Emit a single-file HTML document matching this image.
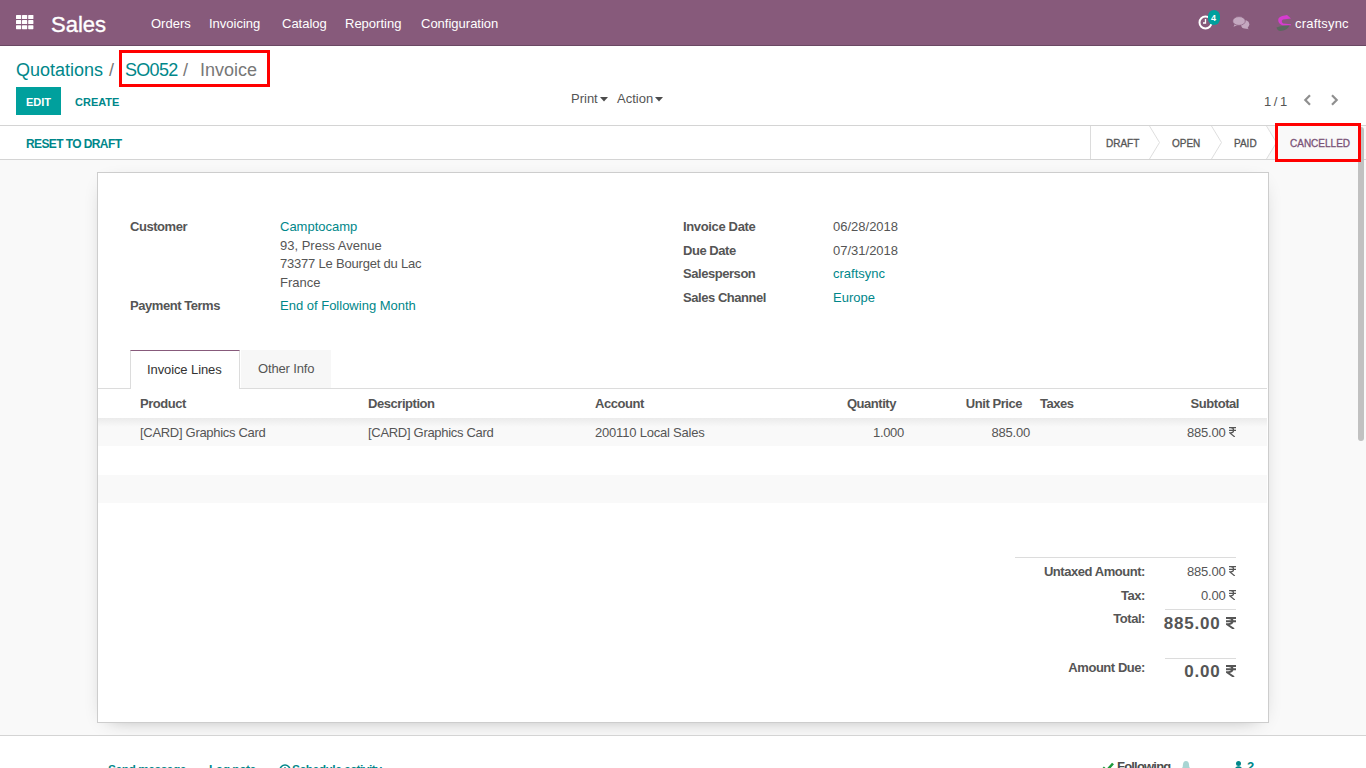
<!DOCTYPE html>
<html><head><meta charset="utf-8">
<style>
html,body{margin:0;padding:0;width:1366px;height:768px;overflow:hidden;background:#f9f9f9;font-family:"Liberation Sans",sans-serif;color:#555}
.a{position:absolute}
.t{position:absolute;white-space:nowrap;line-height:0;font-size:13px}
.b{font-weight:bold}
.teal{color:#00878a}
#nav{left:0;top:0;width:1366px;height:45px;background:#875a7b;border-bottom:1px solid #6a4863}
#nav .t{color:#fff}
#cp{left:0;top:46px;width:1366px;height:79px;background:#fff;border-bottom:1px solid #d4d4d4}
#sb{left:0;top:126px;width:1366px;height:33px;background:#fff;border-bottom:1px solid #d4d4d4}
#sheet{left:97px;top:172px;width:1170px;height:549px;background:#fff;border:1px solid #cdcdcd;box-shadow:0 5px 20px -12px rgba(0,0,0,.45)}
#chat{left:0;top:735px;width:1366px;height:33px;background:#fff;border-top:1px solid #d4d4d4}
</style></head><body>

<!-- NAVBAR -->
<div id="nav" class="a">
  <svg class="a" style="left:16px;top:15px" width="18" height="15" viewBox="0 0 18 15"><g fill="#fff"><rect x="0" y="0" width="5.2" height="4" rx="0.6"/><rect x="6" y="0" width="5.2" height="4" rx="0.6"/><rect x="12.2" y="0" width="5.2" height="4" rx="0.6"/><rect x="0" y="5.1" width="5.2" height="4" rx="0.6"/><rect x="6" y="5.1" width="5.2" height="4" rx="0.6"/><rect x="12.2" y="5.1" width="5.2" height="4" rx="0.6"/><rect x="0" y="10.2" width="5.2" height="4" rx="0.6"/><rect x="6" y="10.2" width="5.2" height="4" rx="0.6"/><rect x="12.2" y="10.2" width="5.2" height="4" rx="0.6"/></g></svg>
  <div class="t" style="left:51px;top:25px;font-size:22px;-webkit-text-stroke:.35px #fff">Sales</div>
  <div class="t" style="left:151px;top:24px">Orders</div>
  <div class="t" style="left:209px;top:24px">Invoicing</div>
  <div class="t" style="left:282px;top:24px">Catalog</div>
  <div class="t" style="left:345px;top:24px">Reporting</div>
  <div class="t" style="left:421px;top:24px">Configuration</div>
  <!-- clock -->
  <svg class="a" style="left:1198px;top:15px" width="16" height="16" viewBox="0 0 16 16">
    <circle cx="7.5" cy="7.5" r="6" fill="none" stroke="#fff" stroke-width="2"/>
    <path d="M7.5 4v4h-2.5" fill="none" stroke="#fff" stroke-width="1.3"/>
  </svg>
  <div class="a" style="left:1208px;top:10px;width:12px;height:15px;border-radius:6px;background:#00a09d"></div>
  <div class="t b" style="left:1211px;top:18px;font-size:9px">4</div>
  <!-- chat -->
  <svg class="a" style="left:1232px;top:16px" width="18" height="14" viewBox="0 0 18 14">
    <g fill="#c4a8c0">
      <ellipse cx="13" cy="8.3" rx="4.3" ry="4"/>
      <path d="M14.5 11L16.8 13.2L11 12Z"/>
      <path d="M2.8 8L1.5 10.8L6 9Z" />
      <ellipse cx="7" cy="5" rx="6.3" ry="4.4" stroke="#875a7b" stroke-width=".7"/>
    </g>
  </svg>
  <!-- logo -->
  <svg class="a" style="left:1272px;top:10px" width="24" height="24" viewBox="0 0 24 24">
    <path d="M6.5 8.5C8 6 12 5.5 15 5L19 8.5L11 9.5C10 10 9.5 11 10 12.2L11 13.5L19 14.2V15.2L10.5 15.2C7.5 14.5 5.5 11.5 6.5 8.5Z" fill="#d63ccf"/>
    <path d="M4.5 17.5C8 15.8 13 15.8 17.5 15.6C16 19 12.5 21 8.5 21C6.5 21 5 19.5 4.5 17.5Z" fill="#5b685e"/>
  </svg>
  <div class="t" style="left:1295px;top:24px;letter-spacing:.2px">craftsync</div>
</div>

<!-- CONTROL PANEL -->
<div id="cp" class="a">
  <div class="t teal" style="left:16px;top:24px;font-size:18px">Quotations</div>
  <div class="t" style="left:109px;top:24px;font-size:18px;color:#777">/</div>
  <div class="t teal" style="left:125px;top:24px;font-size:18px;letter-spacing:-.7px">SO052</div>
  <div class="t" style="left:183px;top:24px;font-size:18px;color:#777">/</div>
  <div class="t" style="left:200px;top:24px;font-size:18px;color:#777">Invoice</div>
  <div class="a" style="left:119px;top:4px;width:145px;height:31px;border:3px solid #f00"></div>
  <div class="a" style="left:16px;top:41px;width:45px;height:28px;background:#00a09d"></div>
  <div class="t b" style="left:26px;top:56px;font-size:11px;color:#fff">EDIT</div>
  <div class="t b teal" style="left:75px;top:56px;font-size:11px">CREATE</div>
  <div class="t" style="left:571px;top:53px">Print</div>
  <div class="t" style="left:617px;top:53px">Action</div>
  <div class="t" style="left:1264px;top:56px;letter-spacing:-.5px">1 / 1</div>

  <svg class="a" style="left:600px;top:51px" width="8" height="5" viewBox="0 0 8 5"><path d="M0 0H8L4 4.5Z" fill="#4c4c4c"/></svg>
  <svg class="a" style="left:655px;top:51px" width="8" height="5" viewBox="0 0 8 5"><path d="M0 0H8L4 4.5Z" fill="#4c4c4c"/></svg>
  <svg class="a" style="left:1303px;top:48px" width="9" height="12" viewBox="0 0 9 12"><path d="M7 1.2L2.3 6L7 10.8" fill="none" stroke="#8f8f8f" stroke-width="2.2"/></svg>
  <svg class="a" style="left:1330px;top:48px" width="9" height="12" viewBox="0 0 9 12"><path d="M2 1.2L6.7 6L2 10.8" fill="none" stroke="#8f8f8f" stroke-width="2.2"/></svg>
</div>

<!-- STATUSBAR -->
<div id="sb" class="a">
  <div class="t b teal" style="left:26px;top:18px;font-size:12px;letter-spacing:-.6px">RESET TO DRAFT</div>
  <div class="a" style="left:1276px;top:0;width:90px;height:33px;background:#f9f9f9"></div>
  <div class="a" style="left:1090px;top:0;width:1px;height:33px;background:#dcdcdc"></div>
  <svg class="a" style="left:1149px;top:0" width="12" height="33" viewBox="0 0 12 33"><path d="M0.5 0L10.5 16.5L0.5 33" fill="none" stroke="#dedede" stroke-width="1"/></svg>
  <svg class="a" style="left:1211px;top:0" width="12" height="33" viewBox="0 0 12 33"><path d="M0.5 0L10.5 16.5L0.5 33" fill="none" stroke="#dedede" stroke-width="1"/></svg>
  <svg class="a" style="left:1266px;top:0" width="12" height="33" viewBox="0 0 12 33"><path d="M0 0L10 16.5L0 33H12V0Z" fill="#f9f9f9"/><path d="M0.5 0L10.5 16.5L0.5 33" fill="none" stroke="#dedede" stroke-width="1"/></svg>
  <div class="t" style="left:1106px;top:18px;font-size:10px;color:#555;-webkit-text-stroke:.3px #555">DRAFT</div>
  <div class="t" style="left:1172px;top:18px;font-size:10px;color:#555;-webkit-text-stroke:.3px #555">OPEN</div>
  <div class="t" style="left:1234px;top:18px;font-size:10px;color:#555;-webkit-text-stroke:.3px #555">PAID</div>
  <div class="t" style="left:1290px;top:18px;font-size:10px;color:#7a5277;-webkit-text-stroke:.3px #7a5277">CANCELLED</div>
  <div class="a" style="left:1275px;top:-3px;width:80px;height:33px;border:3px solid #f00;z-index:5"></div>
</div>

<!-- SHEET -->
<div id="sheet" class="a"></div>


<!-- SHEET CONTENT -->
<div class="t b" style="left:130px;top:227px;letter-spacing:-.45px">Customer</div>
<div class="t teal" style="left:280px;top:227px">Camptocamp</div>
<div class="t" style="left:280px;top:246px">93, Press Avenue</div>
<div class="t" style="left:280px;top:264px;letter-spacing:-.2px">73377 Le Bourget du Lac</div>
<div class="t" style="left:280px;top:283px">France</div>
<div class="t b" style="left:130px;top:306px;letter-spacing:-.45px">Payment Terms</div>
<div class="t teal" style="left:280px;top:306px">End of Following Month</div>

<div class="t b" style="left:683px;top:227px;letter-spacing:-.35px">Invoice Date</div>
<div class="t" style="left:833px;top:227px">06/28/2018</div>
<div class="t b" style="left:683px;top:251px;letter-spacing:-.45px">Due Date</div>
<div class="t" style="left:833px;top:251px">07/31/2018</div>
<div class="t b" style="left:683px;top:274px;letter-spacing:-.45px">Salesperson</div>
<div class="t teal" style="left:833px;top:274px">craftsync</div>
<div class="t b" style="left:683px;top:298px;letter-spacing:-.45px">Sales Channel</div>
<div class="t teal" style="left:833px;top:298px">Europe</div>

<!-- tabs -->
<div class="a" style="left:98px;top:388px;width:1169px;height:1px;background:#dcdcdc"></div>
<div class="a" style="left:241px;top:350px;width:90px;height:38px;background:#f7f7f7"></div>
<div class="a" style="left:130px;top:350px;width:108px;height:38px;background:#fff;border:1px solid #dcdcdc;border-top-color:#875a7b;border-bottom:none"></div>
<div class="t" style="left:147px;top:370px;color:#333;letter-spacing:-.1px">Invoice Lines</div>
<div class="t" style="left:258px;top:369px;letter-spacing:-.15px">Other Info</div>

<!-- table -->
<div class="a" style="left:98px;top:418px;width:1169px;height:28px;background:linear-gradient(#ebebeb,#f9f9f9 9px)"></div>
<div class="a" style="left:98px;top:475px;width:1169px;height:28px;background:#f9f9f9"></div>
<div class="t b" style="left:140px;top:404px;letter-spacing:-.45px">Product</div>
<div class="t b" style="left:368px;top:404px;letter-spacing:-.45px">Description</div>
<div class="t b" style="left:595px;top:404px;letter-spacing:-.45px">Account</div>
<div class="t b" style="right:470px;top:404px;letter-spacing:-.45px">Quantity</div>
<div class="t b" style="right:344px;top:404px;letter-spacing:-.45px">Unit Price</div>
<div class="t b" style="left:1040px;top:404px;letter-spacing:-.45px">Taxes</div>
<div class="t b" style="right:127px;top:404px;letter-spacing:-.45px">Subtotal</div>
<div class="t" style="left:140px;top:433px;letter-spacing:-.3px">[CARD] Graphics Card</div>
<div class="t" style="left:368px;top:433px;letter-spacing:-.3px">[CARD] Graphics Card</div>
<div class="t" style="left:595px;top:433px;letter-spacing:-.2px">200110 Local Sales</div>
<div class="t" style="right:462px;top:433px;letter-spacing:-.3px">1.000</div>
<div class="t" style="right:336px;top:433px;letter-spacing:-.2px">885.00</div>
<div class="t" style="right:130px;top:433px;letter-spacing:-.2px">885.00 <svg width="7" height="10" viewBox="0 0 7 10" style="vertical-align:0;margin-top:-20px"><path d="M0 0.6H7M0 3.3H7M1.6 0.6C5.6 0.6 5.6 5.8 1.6 5.8H0.6L5.8 10" fill="none" stroke="currentColor" stroke-width="1.15"/></svg></div>

<!-- totals -->
<div class="a" style="left:1015px;top:557px;width:221px;height:1px;background:#dcdcdc"></div>
<div class="t b" style="right:221px;top:572px;letter-spacing:-.45px">Untaxed Amount:</div>
<div class="t" style="right:130px;top:572px;letter-spacing:-.2px">885.00 <svg width="7" height="10" viewBox="0 0 7 10" style="vertical-align:0;margin-top:-20px"><path d="M0 0.6H7M0 3.3H7M1.6 0.6C5.6 0.6 5.6 5.8 1.6 5.8H0.6L5.8 10" fill="none" stroke="currentColor" stroke-width="1.15"/></svg></div>
<div class="t b" style="right:221px;top:596px;letter-spacing:-.45px">Tax:</div>
<div class="t" style="right:130px;top:596px;letter-spacing:-.2px">0.00 <svg width="7" height="10" viewBox="0 0 7 10" style="vertical-align:0;margin-top:-20px"><path d="M0 0.6H7M0 3.3H7M1.6 0.6C5.6 0.6 5.6 5.8 1.6 5.8H0.6L5.8 10" fill="none" stroke="currentColor" stroke-width="1.15"/></svg></div>
<div class="a" style="left:1165px;top:609px;width:71px;height:1px;background:#dcdcdc"></div>
<div class="t b" style="right:221px;top:619px;letter-spacing:-.45px">Total:</div>
<div class="t b" style="right:130px;top:624px;font-size:17px;letter-spacing:.8px">885.00 <svg width="10" height="12" viewBox="0 0 10 12" style="vertical-align:0;margin-top:-20px"><path d="M0 1H10M0 4.3H10M2.2 1C8 1 8 7.2 2.2 7.2H1L8 12" fill="none" stroke="currentColor" stroke-width="2"/></svg></div>
<div class="a" style="left:1165px;top:658px;width:71px;height:1px;background:#dcdcdc"></div>
<div class="t b" style="right:221px;top:668px;letter-spacing:-.45px">Amount Due:</div>
<div class="t b" style="right:130px;top:672px;font-size:17px;letter-spacing:.8px">0.00 <svg width="10" height="12" viewBox="0 0 10 12" style="vertical-align:0;margin-top:-20px"><path d="M0 1H10M0 4.3H10M2.2 1C8 1 8 7.2 2.2 7.2H1L8 12" fill="none" stroke="currentColor" stroke-width="2"/></svg></div>

<!-- CHATTER -->
<div id="chat" class="a"></div>
<div class="t b teal" style="left:108px;top:770px;font-size:12px;letter-spacing:-.5px">Send message</div>
<div class="t b teal" style="left:209px;top:770px;font-size:12px;letter-spacing:-.5px">Log note</div>
<svg class="a" style="left:279px;top:764px" width="12" height="12" viewBox="0 0 12 12"><circle cx="6" cy="6" r="5" fill="none" stroke="#00878a" stroke-width="1.6"/><path d="M6 3V6.5H3.5" fill="none" stroke="#00878a" stroke-width="1.3"/></svg>
<div class="t b teal" style="left:292px;top:770px;font-size:12px;letter-spacing:-.5px">Schedule activity</div>
<svg class="a" style="left:1102px;top:762px" width="12" height="10" viewBox="0 0 12 10"><path d="M1 5.5L4.5 8.8L11 1.5" fill="none" stroke="#1d9a3c" stroke-width="2.6"/></svg>
<div class="t b" style="left:1117px;top:767px;font-size:13px;letter-spacing:-.8px;color:#4c4c4c">Following</div>
<svg class="a" style="left:1181px;top:761px" width="10" height="10" viewBox="0 0 10 10"><path d="M5 0C2.5 0 1.8 2.5 1.8 5.5L0.5 8.5H9.5L8.2 5.5C8.2 2.5 7.5 0 5 0Z" fill="#a8d5d3"/></svg>
<svg class="a" style="left:1235px;top:761px" width="7" height="9" viewBox="0 0 7 9"><circle cx="3.5" cy="2.6" r="2.5" fill="#00878a"/><path d="M0 9C0 6 1.5 5.3 3.5 5.3S7 6 7 9Z" fill="#00878a"/></svg>
<div class="t b teal" style="left:1247px;top:767px;font-size:13px">2</div>
<!-- scrollbar -->
<div class="a" style="left:1358px;top:127px;width:6px;height:314px;border-radius:3px;background:#c1c1c1;z-index:3"></div>

</body></html>
